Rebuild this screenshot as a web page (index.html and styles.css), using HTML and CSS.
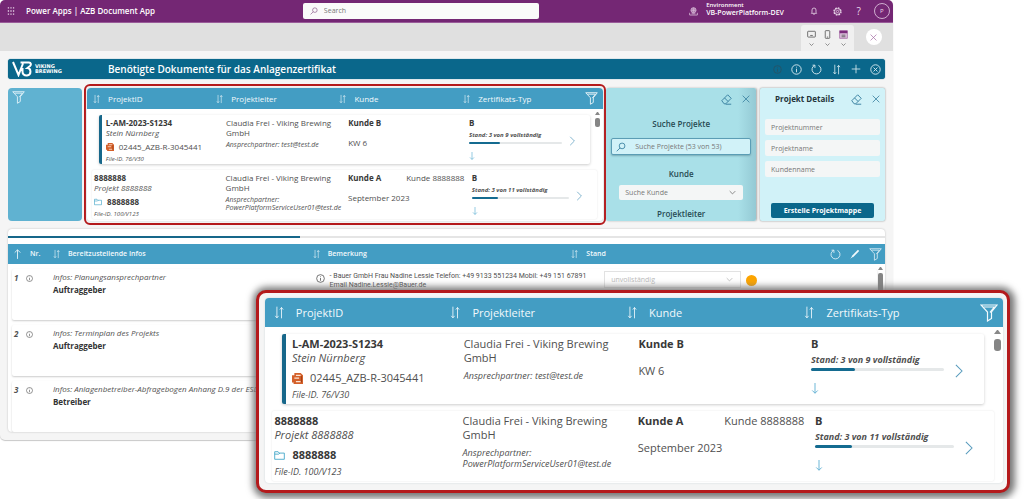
FILE: index.html
```html
<!DOCTYPE html>
<html lang="de">
<head>
<meta charset="utf-8">
<title>AZB Document App</title>
<link rel="stylesheet" href="styles.css">
</head>
<body>
<svg class="sprite" aria-hidden="true">
  <symbol id="sort" viewBox="0 0 12 16"><path d="M3.500 1v13M1.500 12l2 2.500 2-2.500M9 15V2M7 4.500 9 2l2 2.500"/></symbol>
  <symbol id="funnel" viewBox="0 0 18 18"><path d="M1 1h16l-5.500 7v6.500L7.500 17V8z"/><path d="M3.500 3h11L10 8.500"/></symbol>
  <symbol id="close" viewBox="0 0 12 12"><path d="M1 1l10 10M11 1 1 11"/></symbol>
  <symbol id="eraser" viewBox="0 0 14 14"><path d="M1 8.500 8.500 1 13 5.500 6 12.500H4zM4.500 5l4.500 4.500M6 13h7"/></symbol>
  <symbol id="info" viewBox="0 0 14 14"><circle cx="7" cy="7" r="6"/><path d="M7 6v4.500M7 3.500v1"/></symbol>
  <symbol id="refresh" viewBox="0 0 14 14"><path d="M9.500 1.800a5.700 5.700 0 1 1-5 0M2 1.500h3V5"/></symbol>
  <symbol id="plus" viewBox="0 0 14 14"><path d="M7 1v12M1 7h12"/></symbol>
  <symbol id="cancel" viewBox="0 0 14 14"><circle cx="7" cy="7" r="6"/><path d="M4.500 4.500l5 5M9.500 4.500l-5 5"/></symbol>
  <symbol id="search" viewBox="0 0 14 14"><circle cx="8.500" cy="5.500" r="4"/><path d="M5.700 8.300 1 13"/></symbol>
  <symbol id="right" viewBox="0 0 10 16"><path d="M2 1l7 7-7 7"/></symbol>
  <symbol id="down" viewBox="0 0 10 14"><path d="M5 0v13M1.500 9.500 5 13l3.500-3.500"/></symbol>
  <symbol id="up" viewBox="0 0 10 14"><path d="M5 14V1M1 5l4-4 4 4"/></symbol>
  <symbol id="chevron" viewBox="0 0 10 6"><path d="M1 1l4 4 4-4"/></symbol>
  <symbol id="pencil" viewBox="0 0 14 14"><path d="M3 11 12 2" stroke-width="2.500"/><path d="M1 13l2-2"/></symbol>
  <symbol id="folder" viewBox="0 0 16 13"><path d="M1 12V1h5l1.500 2H15v9zM1 4.500h6L8.500 3"/></symbol>
  <symbol id="doc" viewBox="0 0 14 14"><path d="M3 0h8l3 3v11H2V12H0V3h3z" fill="#d4602a" stroke="none"/><path d="M5 3h6M3 6.500h6M5 11h6" stroke="#fbe3d3" stroke-width="1.400"/><path d="M12 4v8" stroke="#9c3d12"/></symbol>
  <symbol id="waffle" viewBox="0 0 10 10"><path d="M1 1h8M1 5h8M1 9h8" stroke="#e3cfe3" stroke-width="1.600" stroke-dasharray="1.600"/></symbol>
  <symbol id="bell" viewBox="0 0 12 12"><path d="M2 9.500h8l-1-1.500V4.500a3 3 0 0 0-6 0V8zM5 11h2"/></symbol>
  <symbol id="gear" viewBox="0 0 14 14"><circle cx="7" cy="7" r="5.500" stroke-width="2" stroke-dasharray="2.700 1.600"/><circle cx="7" cy="7" r="4.500"/><circle cx="7" cy="7" r="1.800"/></symbol>
  <symbol id="environment" viewBox="0 0 14 14"><circle cx="7" cy="5" r="4"/><path d="M3 5h8M7 1v8M5 1.500v7M9 1.500v7M1 9v3.500h12V9M4 10.500h6"/></symbol>
  <symbol id="tablet" viewBox="0 0 14 12"><rect x="1" y="1" width="12" height="9" rx="1"/><path d="M5 7.500h4"/></symbol>
  <symbol id="phone" viewBox="0 0 10 14"><rect x="1.500" y="1" width="7" height="12" rx="1"/><path d="M4 11h2"/></symbol>
  <symbol id="window" viewBox="0 0 14 14"><path d="M1 1h12v12H1z" fill="#dcc0dc" stroke="#a56aa5"/><path d="M1 3h12" stroke="#7b2c7b" stroke-width="4"/><path d="M4 8h6M4 10.500h6"/></symbol>
</svg>

<main class="app">
  <header class="topbar">
    <svg class="icon icon-8"><use href="#waffle"/></svg>
    <h1 class="topbar-title">Power Apps | AZB Document App</h1>
    <label class="global-search">
      <svg class="icon icon-8"><use href="#search"/></svg>
      <input type="text" placeholder="Search" aria-label="Search">
    </label>
    <div class="environment">
      <svg class="icon icon-9"><use href="#environment"/></svg>
      <div><div class="environment-label">Environment</div><div class="environment-name">VB-PowerPlatform-DEV</div></div>
    </div>
    <div class="topbar-actions">
      <button aria-label="Notifications"><svg class="icon icon-8"><use href="#bell"/></svg></button>
      <button aria-label="Settings"><svg class="icon icon-9"><use href="#gear"/></svg></button>
      <button class="help" aria-label="Help">?</button>
      <button class="avatar" aria-label="Account">P</button>
    </div>
  </header>

  <div class="preview-bar">
    <div class="devices">
      <button aria-label="Tablet"><svg class="icon icon-9"><use href="#tablet"/></svg><svg class="caret"><use href="#chevron"/></svg></button>
      <button aria-label="Phone"><svg class="icon icon-9"><use href="#phone"/></svg><svg class="caret"><use href="#chevron"/></svg></button>
      <button aria-label="Window"><svg class="icon icon-9"><use href="#window"/></svg><svg class="caret"><use href="#chevron"/></svg></button>
    </div>
    <button class="close-preview" aria-label="Close"><svg class="icon icon-6"><use href="#close"/></svg></button>
  </div>

  <div class="content">
    <div class="brandbar">
      <svg class="logo" viewBox="0 0 20 16" aria-hidden="true"><path d="M1 1l5.500 13L11 2.500M8.500 1.500H17c2 0 2.500 2 1 3.500L15.500 7c3.500 0 4.500 7-.5 7.500-3 .2-4.500-1.500-4.500-4V7"/></svg>
      <div class="brand">VIKING<br>BREWING</div>
      <h2 class="brandbar-title">Benötigte Dokumente für das Anlagenzertifikat</h2>
      <div class="brandbar-actions">
        <button class="muted" aria-label="Hinweis"><svg class="icon icon-9"><use href="#info"/></svg></button>
        <button aria-label="Info"><svg class="icon icon-11"><use href="#info"/></svg></button>
        <button aria-label="Aktualisieren"><svg class="icon icon-11"><use href="#refresh"/></svg></button>
        <button aria-label="Sortieren"><svg class="icon icon-11"><use href="#sort"/></svg></button>
        <button aria-label="Neu"><svg class="icon icon-10"><use href="#plus"/></svg></button>
        <button aria-label="Beenden"><svg class="icon icon-11"><use href="#cancel"/></svg></button>
      </div>
    </div>

    <div class="panels">
      <aside class="filter-panel"><svg class="icon icon-13"><use href="#funnel"/></svg></aside>

      <section class="projects">
        <div class="projects-list">
          <div class="projects-head">
            <div><svg class="sort-icon"><use href="#sort"/></svg>ProjektID</div>
            <div><svg class="sort-icon"><use href="#sort"/></svg>Projektleiter</div>
            <div><svg class="sort-icon"><use href="#sort"/></svg>Kunde</div>
            <div><svg class="sort-icon"><use href="#sort"/></svg>Zertifikats-Typ<svg class="funnel-icon"><use href="#funnel"/></svg></div>
          </div>
          <div class="projects-body">
            <article class="project project-selected">
              <div>
                <div class="strong">L-AM-2023-S1234</div><div class="subtitle">Stein Nürnberg</div>
                <div class="file"><svg class="doc-icon"><use href="#doc"/></svg>02445_AZB-R-3045441</div>
                <div class="file-id">File-ID. 76/V30</div>
              </div>
              <div>Claudia Frei - Viking Brewing GmbH<div class="contact">Ansprechpartner: test@test.de</div></div>
              <div><div class="strong">Kunde B</div><div class="date">KW 6</div></div>
              <div><div class="strong">B</div><div class="status">Stand: 3 von 9 vollständig</div>
                <div class="track"><div class="fill" style="width:33%"></div></div><svg class="down-icon"><use href="#down"/></svg></div>
              <svg class="next-icon"><use href="#right"/></svg>
            </article>
            <article class="project project-wide">
              <div>
                <div class="strong">8888888</div><div class="subtitle">Projekt 8888888</div>
                <div class="file strong"><svg class="folder-icon"><use href="#folder"/></svg>8888888</div>
                <div class="file-id">File-ID. 100/V123</div>
              </div>
              <div>Claudia Frei - Viking Brewing GmbH<div class="contact">Ansprechpartner: PowerPlatformServiceUser01@test.de</div></div>
              <div><div class="customer"><span class="strong">Kunde A</span><span>Kunde 8888888</span></div><div class="date">September 2023</div></div>
              <div><div class="strong">B</div><div class="status">Stand: 3 von 11 vollständig</div>
                <div class="track"><div class="fill" style="width:27%"></div></div><svg class="down-icon"><use href="#down"/></svg></div>
              <svg class="next-icon"><use href="#right"/></svg>
            </article>
            <div class="scrollbar"></div>
          </div>
        </div>
      </section>

      <section class="search-panel">
        <div class="panel-tools">
          <button aria-label="Leeren"><svg class="icon icon-11"><use href="#eraser"/></svg></button>
          <button aria-label="Schließen"><svg class="icon icon-8"><use href="#close"/></svg></button>
        </div>
        <label class="field-title" for="project-search">Suche Projekte</label>
        <div class="search-box"><svg class="icon icon-10"><use href="#search"/></svg><input id="project-search" type="text" placeholder="Suche Projekte (53 von 53)"></div>
        <label class="field-title" for="customer-search">Kunde</label>
        <div class="select-box"><select id="customer-search"><option>Suche Kunde</option></select><svg class="select-caret"><use href="#chevron"/></svg></div>
        <div class="field-title">Projektleiter</div>
      </section>

      <section class="details-panel">
        <div class="panel-tools">
          <h3>Projekt Details</h3>
          <button aria-label="Leeren"><svg class="icon icon-11"><use href="#eraser"/></svg></button>
          <button aria-label="Schließen"><svg class="icon icon-8"><use href="#close"/></svg></button>
        </div>
        <input type="text" placeholder="Projektnummer" aria-label="Projektnummer">
        <input type="text" placeholder="Projektname" aria-label="Projektname">
        <input type="text" placeholder="Kundenname" aria-label="Kundenname">
        <button class="primary">Erstelle Projektmappe</button>
      </section>
    </div>

    <section class="documents">
      <div class="progress"><div class="progress-fill" style="width:33.300%"></div></div>
      <table>
        <thead>
          <tr>
            <th><svg class="up-icon"><use href="#up"/></svg>Nr.</th>
            <th><svg class="sort-icon"><use href="#sort"/></svg>Bereitzustellende Infos</th>
            <th><svg class="sort-icon"><use href="#sort"/></svg>Bemerkung</th>
            <th><svg class="sort-icon"><use href="#sort"/></svg>Stand
              <span class="table-actions">
                <button aria-label="Aktualisieren"><svg class="icon icon-11"><use href="#refresh"/></svg></button>
                <button aria-label="Bearbeiten"><svg class="icon icon-10"><use href="#pencil"/></svg></button>
                <button aria-label="Filtern"><svg class="icon icon-13"><use href="#funnel"/></svg></button>
              </span>
            </th>
          </tr>
        </thead>
        <tbody>
          <tr>
            <td class="number">1<svg class="icon icon-6"><use href="#info"/></svg></td>
            <td><div class="info">Infos: Planungsansprechpartner</div><div class="owner">Auftraggeber</div></td>
            <td class="remark"><svg class="icon icon-9"><use href="#info"/></svg><div>- Bauer GmbH Frau Nadine Lessie Telefon: +49 9133 551234 Mobil: +49 151 67891<br>Email Nadine.Lessie@Bauer.de</div></td>
            <td class="state"><div class="state-select"><select aria-label="Stand" disabled><option>unvollständig</option></select><svg class="select-caret"><use href="#chevron"/></svg></div><span class="dot"></span></td>
          </tr>
          <tr>
            <td class="number">2<svg class="icon icon-6"><use href="#info"/></svg></td>
            <td><div class="info">Infos: Terminplan des Projekts</div><div class="owner">Auftraggeber</div></td>
            <td></td><td></td>
          </tr>
          <tr>
            <td class="number">3<svg class="icon icon-6"><use href="#info"/></svg></td>
            <td><div class="info">Infos: Anlagenbetreiber-Abfragebogen Anhang D.9 der ESD-</div><div class="owner">Betreiber</div></td>
            <td></td><td></td>
          </tr>
        </tbody>
      </table>
      <div class="scrollbar scrollbar-long"></div>
    </section>
  </div>
</main>

<section class="projects projects-large">
  <div class="projects-list">
    <div class="projects-head">
      <div><svg class="sort-icon"><use href="#sort"/></svg>ProjektID</div>
      <div><svg class="sort-icon"><use href="#sort"/></svg>Projektleiter</div>
      <div><svg class="sort-icon"><use href="#sort"/></svg>Kunde</div>
      <div><svg class="sort-icon"><use href="#sort"/></svg>Zertifikats-Typ<svg class="funnel-icon"><use href="#funnel"/></svg></div>
    </div>
    <div class="projects-body">
      <article class="project project-selected">
        <div>
          <div class="strong">L-AM-2023-S1234</div><div class="subtitle">Stein Nürnberg</div>
          <div class="file"><svg class="doc-icon"><use href="#doc"/></svg>02445_AZB-R-3045441</div>
          <div class="file-id">File-ID. 76/V30</div>
        </div>
        <div>Claudia Frei - Viking Brewing GmbH<div class="contact">Ansprechpartner: test@test.de</div></div>
        <div><div class="strong">Kunde B</div><div class="date">KW 6</div></div>
        <div><div class="strong">B</div><div class="status">Stand: 3 von 9 vollständig</div>
          <div class="track"><div class="fill" style="width:33%"></div></div><svg class="down-icon"><use href="#down"/></svg></div>
        <svg class="next-icon"><use href="#right"/></svg>
      </article>
      <article class="project project-wide">
        <div>
          <div class="strong">8888888</div><div class="subtitle">Projekt 8888888</div>
          <div class="file strong"><svg class="folder-icon"><use href="#folder"/></svg>8888888</div>
          <div class="file-id">File-ID. 100/V123</div>
        </div>
        <div>Claudia Frei - Viking Brewing GmbH<div class="contact">Ansprechpartner: PowerPlatformServiceUser01@test.de</div></div>
        <div><div class="customer"><span class="strong">Kunde A</span><span>Kunde 8888888</span></div><div class="date">September 2023</div></div>
        <div><div class="strong">B</div><div class="status">Stand: 3 von 11 vollständig</div>
          <div class="track"><div class="fill" style="width:27%"></div></div><svg class="down-icon"><use href="#down"/></svg></div>
        <svg class="next-icon"><use href="#right"/></svg>
      </article>
      <div class="scrollbar"></div>
    </div>
  </div>
</section>
</body>
</html>
```

FILE: styles.css
```css
* { box-sizing: border-box; }
html { background: #fff; }
body {
  margin: 0;
  position: relative;
  min-height: 100vh;
  background: #fff;
  font: 7px/10px "Open Sans", "Noto Sans", sans-serif;
  color: #505050;
}
h1, h2, h3 { margin: 0; font-size: inherit; }
button, input, select { font: inherit; color: inherit; border: 0; margin: 0; padding: 0; background: none; min-width: 0; }
button { display: flex; align-items: center; justify-content: center; }
svg { display: block; flex: none; fill: none; stroke: currentColor; stroke-width: 1.2px; }
.sprite { position: absolute; width: 0; height: 0; }
.icon-6 { width: 7px; height: 7px; }
.icon-8 { width: 8px; height: 8px; }
.icon-9 { width: 9px; height: 9px; }
.icon-10 { width: 10px; height: 10px; }
.icon-11 { width: 11px; height: 11px; }
.icon-13 { width: 13px; height: 13px; }

.app { width: 87.2%; border-radius: 5px; background: #f5f5f5; box-shadow: 0 1px 1px #c8c8c8; overflow: hidden; }

/* Purple suite bar */
.topbar { display: grid; grid-template-columns: 10px 280fr 231fr 164fr 180fr; align-items: center; height: 23px; padding: 0 3px 0 7px; background: #742774; border-bottom: 1px solid #9a5b9a; color: #fff; }
.topbar-title { padding-left: 9px; font-size: 8px; font-weight: 600; }
.global-search { display: flex; align-items: center; gap: 6px; height: 16px; padding: 0 7px; border-radius: 2px; background: #fafafa; color: #8a5a8a; }
.global-search input { flex: 1; }
input::placeholder { color: #777; opacity: 1; }
.environment { display: flex; align-items: center; justify-content: flex-end; gap: 8px; white-space: nowrap; line-height: 8px; font-weight: 600; }
.environment > .icon { color: #dcc0dc; }
.environment > div { width: 0; overflow: visible; padding-bottom: 5px; }
.environment-label { font-size: 6px; }
.topbar-actions { display: flex; align-items: center; justify-content: flex-end; gap: 15px; color: #ead9ea; }
.help { font-size: 10px; }
.avatar { width: 16px; height: 16px; margin-left: -2px; border: 1px solid #cfaecf; border-radius: 50%; font-size: 6px; }

.preview-bar { display: flex; align-items: flex-end; justify-content: flex-end; gap: 12px; height: 28px; padding-right: 11px; background: #e0e0e0; }
.devices { display: flex; align-items: center; gap: 7px; height: 26px; padding: 0 6px; border-radius: 3px 3px 0 0; background: #f0f0f0; }
.devices button { flex-direction: column; gap: 4px; }
.caret { width: 5px; height: 3px; }
.close-preview { width: 16px; height: 16px; margin-bottom: 6px; border-radius: 50%; background: #fff; color: #a56aa5; }

.content { padding: 8px; }
.brandbar { display: flex; align-items: center; height: 20px; padding: 0 4px; border-radius: 3px; background: #0a678b; color: #fff; box-shadow: 0 0 1px #0a678b; }
.logo { width: 20px; height: 16px; stroke-width: 2px; }
.brand { width: 76px; padding-left: 3px; font: 700 5px/5px "DejaVu Sans", sans-serif; }
.brandbar-title { flex: 1; font-size: 10px; font-weight: 600; white-space: nowrap; }
.brandbar-actions { display: flex; align-items: center; gap: 9px; color: #d5e8ee; }
.muted { color: #2b5161; }

/* Middle row */
.panels { display: grid; grid-template-columns: 74fr 525fr 150fr 129fr; margin-top: 5px; }
.filter-panel { margin: 4px 0; padding: 3px 4px; border-radius: 4px; background: #60b2d1; color: #e7f5fa; }

/* Project gallery; the large variant only changes the measures */
.projects {
  --text: 8px; --small: 6px; --contact: 7px; --line: 10px; --small-line: 8px; --head-text: 8px; --head: 21px;
  --sort-w: 7px; --sort-h: 10px; --sort-gap: 8px; --funnel: 13px;
  --gap: 6px; --lead: 3px; --file-line: 11px; --icon: 8px; --icon-gap: 5px; --date-gap: 10px;
  --down-gap: 8px; --down-w: 6px; --down-h: 8px; --next-w: 6px; --next-h: 10px; --track: 2px; --card: 49px;
  margin-left: 2px;
  padding: 2px 1px;
  border: 2px solid #b41a1c;
  border-radius: 6px;
  background: #f5f5f5;
}
.projects-large {
  --text: 11px; --small: 9px; --contact: 9px; --line: 14px; --small-line: 11px; --head-text: 11px; --head: 29px;
  --sort-w: 10px; --sort-h: 15px; --sort-gap: 12px; --funnel: 18px;
  --gap: 7px; --lead: 5px; --file-line: 16px; --icon: 11px; --icon-gap: 7px; --date-gap: 13px;
  --down-gap: 12px; --down-w: 8px; --down-h: 11px; --next-w: 9px; --next-h: 14px; --track: 3px; --card: 70px;
  position: absolute;
  top: 290px;
  left: 25%;
  right: 14px;
  margin: 0;
  padding: 5px 4px 7px 6px;
  border-width: 3px;
  border-radius: 10px;
  box-shadow: 1px 1px 7px 4px #777;
}
.projects-list { border-radius: 4px; background: #fff; box-shadow: 0 0 2px #c8d4d8; overflow: hidden; font-size: var(--text); line-height: var(--line); }
.projects-head { display: grid; grid-template-columns: 177fr 177fr 178fr 194fr; align-items: center; height: var(--head); padding: 0 5px 0 1.200%; background: #439dc3; color: #f2f9fc; font-size: var(--head-text); }
.projects-head > div { display: flex; align-items: center; }
.sort-icon { width: var(--sort-w); height: var(--sort-h); margin-right: var(--sort-gap); stroke-width: 1px; }
.funnel-icon { width: var(--funnel); height: var(--funnel); margin-left: auto; }
.projects-body { position: relative; display: grid; gap: var(--gap); padding: var(--gap) 0 2px; }
.project { display: grid; height: var(--card); padding-top: 3px; border-radius: 2px; box-shadow: 0 1px 3px #ccc; }
.project > div { min-width: 0; }
.project-selected { grid-template-columns: 172fr 175fr 173fr 143fr 30fr; margin: 0 2.600% 0 2.300%; padding-left: 4px; border-left: 3px solid #17678a; }
.projects-large .project-selected { padding-left: 6px; border-left-width: 4px; }
.project-wide { grid-template-columns: 188fr 175fr 177fr 149fr 30fr; margin: 0 1.200% 0 1%; padding-left: 2px; box-shadow: 0 0 2px #e2e2e2; }
.strong { font-weight: 700; color: #383838; }
.subtitle { font-style: italic; }
.file { display: flex; align-items: center; gap: var(--icon-gap); margin: var(--lead) 0 3px; line-height: var(--file-line); }
.doc-icon, .folder-icon { width: var(--icon); height: var(--icon); }
.folder-icon { color: #35a0c5; }
.file-id, .contact, .status { font-size: var(--small); line-height: var(--small-line); font-style: italic; }
.contact { margin-top: var(--lead); font-size: var(--contact); }
.date { margin-top: var(--date-gap); }
.customer { display: flex; justify-content: space-between; padding-right: 6%; white-space: nowrap; }
.status { margin: 3px 0; font-weight: 700; white-space: nowrap; }
.track { height: var(--track); margin-right: 7%; border-radius: 2px; background: #e5e8e9; }
.fill { height: 100%; border-radius: 2px; background: #146b90; }
.down-icon { width: var(--down-w); height: var(--down-h); margin-top: var(--down-gap); color: #65b3d5; }
.next-icon { align-self: center; width: var(--next-w); height: var(--next-h); color: #579bbd; }
.scrollbar { position: absolute; top: 3px; right: 3px; width: 5px; }
.scrollbar::before { content: ""; display: block; border: 2px solid transparent; border-top: 0; border-bottom: 3px solid #888; }
.scrollbar::after { content: ""; display: block; width: 5px; height: 9px; margin-top: 3px; border-radius: 2px; background: #858585; }
.projects-large .scrollbar { top: 3px; right: 2px; width: 7px; }
.projects-large .scrollbar::before { border-width: 0 3px 4px; }
.projects-large .scrollbar::after { width: 7px; height: 12px; border-radius: 3px; margin-top: 5px; }

/* Right-hand panels */
.search-panel, .details-panel { display: flex; flex-direction: column; margin: 4px 0; border-radius: 2px; overflow: hidden; }
.search-panel { align-items: center; padding: 0 5px; background: linear-gradient(90deg, #a9e0e8 88%, #94c9d4); box-shadow: 1px 0 2px #aaa; }
.details-panel { margin-left: 4px; padding: 0 5px; background: #d1f2f8; box-shadow: 0 0 2px #888; }
.panel-tools { display: flex; align-items: center; justify-content: flex-end; align-self: stretch; gap: 10px; height: 22px; color: #37809f; }
.search-panel .panel-tools { padding-right: 1px; }
.panel-tools h3 { flex: 1; padding-left: 10px; font-size: 8px; font-weight: 700; color: #24343a; white-space: nowrap; }
.field-title { line-height: 12px; margin-top: 8px; font-size: 8px; color: #274a52; font-weight: 600; }
.search-box { display: flex; align-items: center; gap: 9px; align-self: stretch; height: 17px; margin-top: 8px; padding: 0 4px; border: 1px solid #5b9db5; border-radius: 2px; background: #d1f2f8; color: #37809f; box-shadow: 0 1px 2px #78aab5; }
.search-box input { flex: 1; }
.search-box + .field-title { margin-top: 13px; }
.select-box { position: relative; align-self: stretch; height: 15px; margin: 5px 8px 0; border-radius: 2px; background: #f4f6f6; color: #777; }
select { appearance: none; width: 100%; height: 100%; padding: 0 6px; opacity: 1; }
.select-caret { position: absolute; right: 7px; top: 5px; width: 7px; height: 5px; }
.details-panel input { height: 16px; margin-bottom: 5px; padding: 0 6px; border-radius: 2px; background: #f4f6f6; }
.details-panel .panel-tools { margin-bottom: 9px; }
.primary { height: 15px; margin: 21px 6px 0; border-radius: 2px; background: #0a678b; color: #fff; font-weight: 700; white-space: nowrap; }

/* Document table */
.documents { position: relative; --sort-w: 7px; --sort-h: 10px; --sort-gap: 8px; margin-top: 4px; padding-top: 7px; height: 203px; border-radius: 4px; background: #fff; box-shadow: 0 0 2px #bbb; overflow: hidden; }
.progress { height: 2px; margin-bottom: 6px; background: #e5e5e5; }
.progress-fill { height: 100%; background: #17678a; }
table, thead, tbody { display: block; }
tr { display: grid; }
th, td { padding: 0; text-align: left; min-width: 0; }
thead tr { grid-template-columns: 45fr 260fr 259fr 314fr; height: 20px; background: #439dc3; color: #f2f9fc; }
th { display: flex; align-items: center; font-weight: 600; white-space: nowrap; }
th .icon { stroke-width: 1px; }
.up-icon { width: 7px; height: 10px; margin: 0 9px 0 6px; }
.table-actions { display: flex; align-items: center; gap: 9px; margin-left: auto; padding-right: 3px; }
tbody tr { grid-template-columns: 41fr 263fr 289fr 273fr; height: 51px; margin: 5px 8px 0 4px; padding-top: 2px; border-radius: 2px; box-shadow: 0 1px 2px #ccc; }
.number { display: flex; align-items: flex-start; gap: 8px; padding: 2px; font-size: 8px; font-weight: 700; font-style: italic; }
.number .icon { margin-top: 2px; }
.info { font-size: 8px; font-style: italic; line-height: 11px; white-space: nowrap; }
.owner { margin-top: 3px; font-size: 8px; font-weight: 700; color: #333; }
.remark { display: flex; gap: 5px; padding-top: 1px; font-family: Roboto, "Open Sans", sans-serif; line-height: 9px; white-space: nowrap; }
.remark .icon { margin-top: 2px; }
.state { display: flex; align-items: flex-start; gap: 5px; }
.state-select { position: relative; width: 50%; height: 17px; border: 1px solid #e2e2e2; color: #bbb; }
.dot { width: 11px; height: 11px; margin-top: 4px; border-radius: 50%; background: #fca400; }
.scrollbar-long { top: 38px; right: 2px; }
.scrollbar-long::after { height: 60px; }
```
